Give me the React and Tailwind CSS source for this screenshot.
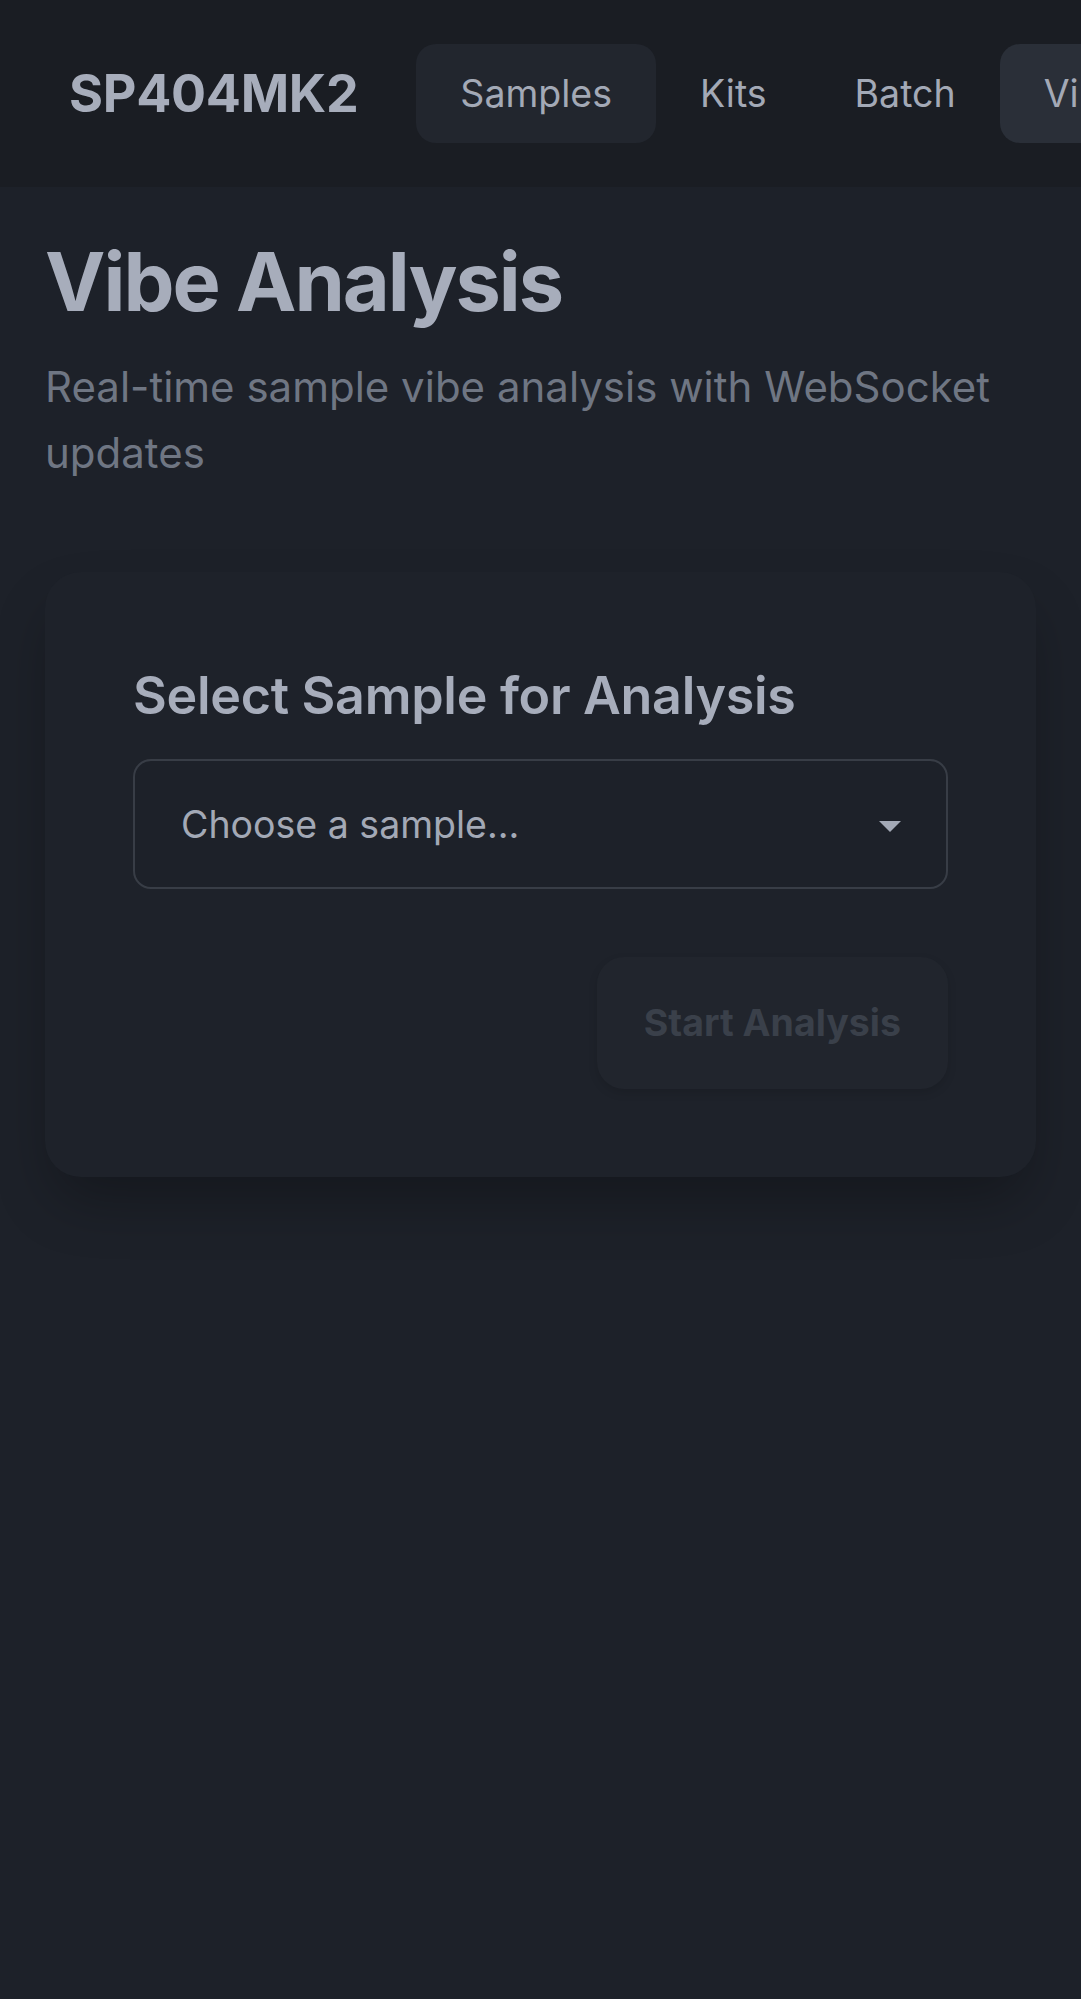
import React from 'react';

const navItems = ['Samples', 'Kits', 'Batch', 'Vibe Analysis', 'Settings'];

export default function App() {
  return (
    <div className="min-h-screen w-full overflow-hidden bg-[#1d2129] font-['Inter','Noto_Sans',sans-serif]">
      {/* Top bar */}
      <header className="flex h-[187px] items-center whitespace-nowrap bg-[#1a1d23] pl-[69px]">
        <span className="mr-[58px] text-[52px] font-bold leading-none tracking-[-0.3px] text-[#a7adbb]">SP404MK2</span>
        <nav className="flex items-center">
          {navItems.map((item) => (
            <button
              key={item}
              className={
                item === 'Samples'
                  ? 'rounded-[20px] bg-[#22262e] px-[44px] py-[18px] text-[37.5px] leading-[63px] text-[#a3a9b6]'
                  : item === 'Vibe Analysis'
                  ? 'rounded-[20px] bg-[#2a2f38] px-[44px] py-[18px] text-[37.5px] leading-[63px] text-[#a3a9b6]'
                  : 'rounded-[20px] px-[44px] py-[18px] text-[37.5px] leading-[63px] text-[#a3a9b6]'
              }
            >
              {item}
            </button>
          ))}
        </nav>
      </header>

      <main className="px-[45px] pt-[50px]">
        <h1 className="text-[81px] font-bold leading-[90px] tracking-[-2px] text-[#a7adbb]">Vibe Analysis</h1>
        <p className="mt-[27px] text-[42px] leading-[66px] text-[#6f7683]">
          Real-time sample vibe analysis with WebSocket updates
        </p>

        {/* Sample picker card */}
        <div className="mt-[86px] rounded-[36px] bg-[#1e222a] px-[88px] pb-[88px] pt-[88px] shadow-[0_30px_60px_-10px_rgba(0,0,0,0.3)]">
          <h2 className="text-[52px] font-semibold leading-[72px] tracking-[-0.3px] text-[#a7adbb]">Select Sample for Analysis</h2>
          <div className="mt-[27px] flex h-[130px] items-center justify-between rounded-[18px] border-2 border-[#383d46] bg-[#1d2129] pl-[46px] pr-[45px]">
            <span className="text-[37.5px] leading-[63px] text-[#a3a9b6]">Choose a sample...</span>
            <svg width="22" height="11" viewBox="0 0 22 11" className="mt-[4px]">
              <path d="M0 0h22L11 11z" fill="#a3a9b6" />
            </svg>
          </div>
          <div className="mt-[68px] flex justify-end">
            <button className="h-[132px] rounded-[27px] bg-[#21252d] px-[47px] text-[37.5px] font-bold text-[#3a404a] shadow-[0_4px_10px_rgba(0,0,0,0.12)]">
              Start Analysis
            </button>
          </div>
        </div>
      </main>
    </div>
  );
}
